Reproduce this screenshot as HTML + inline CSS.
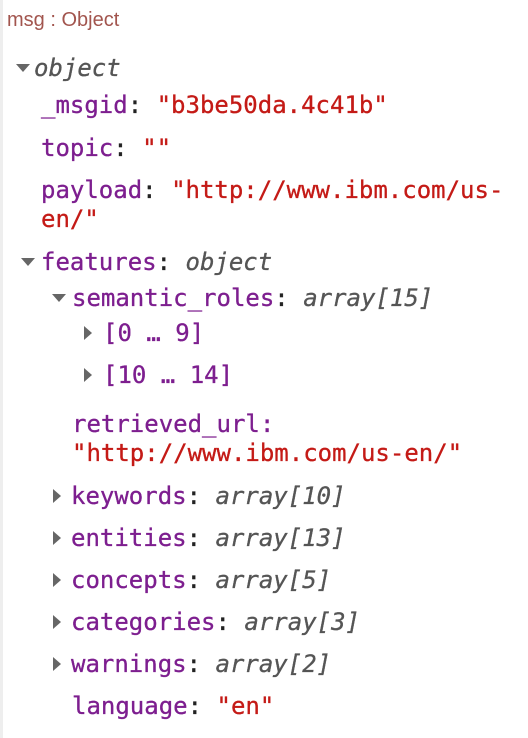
<!DOCTYPE html>
<html><head><style>
body{margin:0;width:528px;height:738px;background:#fff;position:relative;overflow:hidden;}
.bl{position:absolute;left:0;top:0;width:3px;height:738px;background:#eee;}
.h{position:absolute;left:7px;top:9px;font:20px "Liberation Sans",sans-serif;color:#a2554e;}
.l{position:absolute;font:24px "DejaVu Sans Mono",monospace;line-height:28px;white-space:pre;color:#222;-webkit-text-stroke:0.3px;}
.k{color:#7d1e8f}.s{color:#c41a16}.i{font-style:italic;color:#555}
.td{position:absolute;width:0;height:0;border-left:7px solid transparent;border-right:7px solid transparent;border-top:8px solid #666;}
.tr{position:absolute;width:0;height:0;border-top:7px solid transparent;border-bottom:7px solid transparent;border-left:8px solid #666;}
</style></head><body>
<div class="bl"></div>
<div class="h">msg : Object</div>
<div class="td" style="left:16px;top:64px"></div>
<div class="l i" style="left:34px;top:54px">object</div>
<div class="l" style="left:41px;top:91px"><span class="k">_msgid</span>: <span class="s">"b3be50da.4c41b"</span></div>
<div class="l" style="left:41px;top:134px"><span class="k">topic</span>: <span class="s">""</span></div>
<div class="l" style="left:41px;top:176px"><span class="k">payload</span>: <span class="s">"http://www.ibm.com/us-</span></div>
<div class="l s" style="left:41px;top:205px">en/"</div>
<div class="td" style="left:21px;top:258px"></div>
<div class="l" style="left:41px;top:248px"><span class="k">features</span>: <span class="i">object</span></div>
<div class="td" style="left:52px;top:294px"></div>
<div class="l" style="left:72px;top:284px"><span class="k">semantic_roles</span>: <span class="i">array[15]</span></div>
<div class="tr" style="left:84px;top:326px"></div>
<div class="l k" style="left:103px;top:319px">[0 … 9]</div>
<div class="tr" style="left:84px;top:368px"></div>
<div class="l k" style="left:103px;top:361px">[10 … 14]</div>
<div class="l k" style="left:72px;top:410px">retrieved_url:</div>
<div class="l s" style="left:72px;top:439px">"http://www.ibm.com/us-en/"</div>
<div class="tr" style="left:53px;top:489px"></div>
<div class="l" style="left:71px;top:482px"><span class="k">keywords</span>: <span class="i">array[10]</span></div>
<div class="tr" style="left:53px;top:531px"></div>
<div class="l" style="left:71px;top:524px"><span class="k">entities</span>: <span class="i">array[13]</span></div>
<div class="tr" style="left:53px;top:573px"></div>
<div class="l" style="left:71px;top:566px"><span class="k">concepts</span>: <span class="i">array[5]</span></div>
<div class="tr" style="left:53px;top:615px"></div>
<div class="l" style="left:71px;top:608px"><span class="k">categories</span>: <span class="i">array[3]</span></div>
<div class="tr" style="left:53px;top:657px"></div>
<div class="l" style="left:71px;top:650px"><span class="k">warnings</span>: <span class="i">array[2]</span></div>
<div class="l" style="left:72px;top:692px"><span class="k">language</span>: <span class="s">"en"</span></div>
</body></html>
